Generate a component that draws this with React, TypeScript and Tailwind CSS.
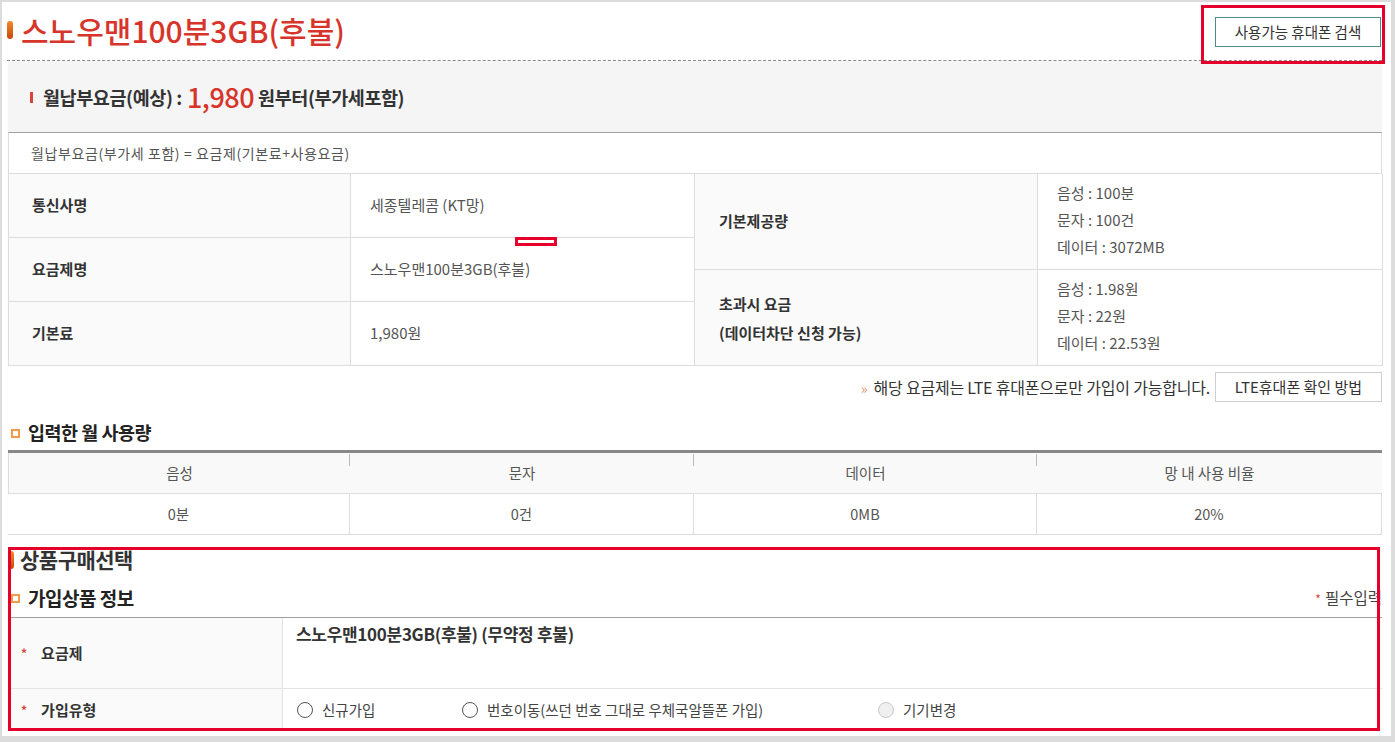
import React from 'react'

const FONT = "font-['Noto_Sans_CJK_KR','Noto_Sans',sans-serif]"

function Bar() {
  return <span className="inline-block h-[18px] w-[6px] rounded-full bg-gradient-to-b from-[#f08a2a] to-[#c9460a]" />
}

function Square() {
  return <span className="inline-block h-[9px] w-[9px] border-2 border-[#f09a4a] bg-white" />
}

function Radio({ label, disabled }: { label: string; disabled?: boolean }) {
  return (
    <label className="flex items-center gap-[9px]">
      <span
        className={`inline-block h-[16px] w-[16px] rounded-full border ${
          disabled ? 'border-[#c8c8c8] bg-[#f0f0f0]' : 'border-[#555] bg-white'
        }`}
      />
      <span className="text-[14.5px] text-[#444]">{label}</span>
    </label>
  )
}

const SPEC = [
  { label: '통신사명', value: '세종텔레콤 (KT망)' },
  { label: '요금제명', value: '스노우맨100분3GB(후불)' },
  { label: '기본료', value: '1,980원' }
]

const USAGE = [
  { head: '음성', value: '0분' },
  { head: '문자', value: '0건' },
  { head: '데이터', value: '0MB' },
  { head: '망 내 사용 비율', value: '20%' }
]

export default function App(): JSX.Element {
  return (
    <div className={`h-[742px] w-[1395px] overflow-hidden bg-[#dcdcdc] pl-[2px] pt-[2px] ${FONT}`}>
      <div className="relative h-[734px] w-[1389px] bg-white pl-[6px] text-[#333]">
        {/* title */}
        <div className="-ml-[1px] flex h-[59px] w-[1375px] items-center justify-between border-b border-dashed border-[#8a8a8a] pr-[1px]">
          <div className="flex items-center gap-[8px] pb-[2px]">
            <Bar />
            <h1 className="text-[30px] font-medium leading-none text-[#d7352b]">스노우맨100분3GB(후불)</h1>
          </div>
          <button className="mt-[1px] h-[30px] w-[166px] border border-[#4f8b8b] text-[14.5px] text-[#333]">
            사용가능 휴대폰 검색
          </button>
        </div>

        <div className="w-[1374px]">
          {/* monthly fee */}
          <div className="flex h-[71px] items-center bg-[#f5f5f5] pl-[22px] pt-[2px]">
            <span className="mr-[10px] inline-block h-[11px] w-[3px] bg-[#d9453b]" />
            <span className="text-[18.5px] font-bold tracking-[-0.4px] text-[#333]">월납부요금(예상) :</span>
            <span className="ml-[5px] text-[27px] font-medium tracking-[-0.5px] text-[#d7352b]">1,980</span>
            <span className="ml-[4px] text-[18.5px] font-bold tracking-[-0.4px] text-[#333]">원부터(부가세포함)</span>
          </div>

          {/* formula */}
          <div className="flex h-[42px] items-center border-x border-b border-t border-x-[#ddd] border-b-[#ddd] border-t-[#a0a0a0] pl-[22px] text-[14px] tracking-[0.6px] text-[#555]">
            월납부요금(부가세 포함) = 요금제(기본료+사용요금)
          </div>

          {/* spec table */}
          <div className="grid grid-cols-[342px_344px_343px_345px] grid-rows-[repeat(6,32px)] border-l border-[#ddd]">
            {SPEC.map((s, i) => (
              <React.Fragment key={s.label}>
                <div
                  className="col-start-1 row-span-2 flex items-center border-b border-r border-[#ddd] bg-[#fafafa] pl-[23px] text-[15px] font-bold text-[#333]"
                  style={{ gridRowStart: i * 2 + 1 }}
                >
                  {s.label}
                </div>
                <div
                  className="col-start-2 row-span-2 flex items-center border-b border-r border-[#ddd] pl-[19px] text-[15px] text-[#555]"
                  style={{ gridRowStart: i * 2 + 1 }}
                >
                  {s.value}
                </div>
              </React.Fragment>
            ))}
            <div className="col-start-3 row-span-3 row-start-1 flex items-center border-b border-r border-[#ddd] bg-[#fafafa] pl-[24px] text-[15px] font-bold text-[#333]">
              기본제공량
            </div>
            <div className="col-start-4 row-span-3 row-start-1 flex flex-col justify-center border-b border-r border-[#ddd] pb-[4px] pl-[19px] text-[15px] leading-[27px] text-[#555]">
              <span>음성 : 100분</span>
              <span>문자 : 100건</span>
              <span>데이터 : 3072MB</span>
            </div>
            <div className="col-start-3 row-span-3 row-start-4 flex flex-col justify-center border-b border-r border-[#ddd] bg-[#fafafa] pl-[24px] text-[15px] font-bold leading-[29px] text-[#333]">
              <span>초과시 요금</span>
              <span>(데이터차단 신청 가능)</span>
            </div>
            <div className="col-start-4 row-span-3 row-start-4 flex flex-col justify-center border-b border-r border-[#ddd] pb-[4px] pl-[19px] text-[15px] leading-[27px] text-[#555]">
              <span>음성 : 1.98원</span>
              <span>문자 : 22원</span>
              <span>데이터 : 22.53원</span>
            </div>
          </div>

          {/* LTE note */}
          <div className="flex items-center justify-end gap-[5px] pt-[6px]">
            <span className="text-[16px] tracking-[-0.2px] text-[#333]">
              <span className="mr-[6px] text-[14px] text-[#e8906a]">»</span>
              해당 요금제는 LTE 휴대폰으로만 가입이 가능합니다.
            </span>
            <button className="h-[30px] w-[167px] border border-[#cfcfcf] text-[15px] text-[#333]">LTE휴대폰 확인 방법</button>
          </div>

          {/* usage */}
          <div className="mt-[18px] flex h-[26px] items-center gap-[8px] pl-[3px]">
            <Square />
            <h2 className="text-[18.5px] font-bold tracking-[-0.5px] text-[#222]">입력한 월 사용량</h2>
          </div>
          <div className="mt-[4px] grid grid-cols-[342px_344px_343px_345px] border-t-[3px] border-[#888]">
            {USAGE.map((u, i) => (
              <div
                key={u.head}
                className="relative flex h-[41px] items-center justify-center border-b border-[#ddd] bg-[#f9f9f9] text-[14.5px] text-[#555] first:border-l last:border-r"
              >
                {i > 0 && <span className="absolute left-[-1px] top-[1px] h-[12px] w-px bg-[#bbb]" />}
                {u.head}
              </div>
            ))}
            {USAGE.map((u) => (
              <div
                key={u.value}
                className="flex h-[41px] items-center justify-center border-b border-r border-[#ddd] text-[14.5px] text-[#555] first:border-l"
              >
                {u.value}
              </div>
            ))}
          </div>

          {/* purchase */}
          <div className="mt-[11px] flex h-[28px] items-center gap-[6px]">
            <Bar />
            <h2 className="text-[21px] font-bold tracking-[-0.5px] text-[#333]">상품구매선택</h2>
          </div>
          <div className="mb-[4px] mt-[9px] flex h-[30px] items-center justify-between pl-[3px]">
            <div className="flex items-center gap-[8px]">
              <Square />
              <h3 className="text-[19px] font-bold tracking-[-0.5px] text-[#222]">가입상품 정보</h3>
            </div>
            <span className="text-[15.5px] text-[#444]">
              <span className="mr-[4px] text-[12px] text-[#d9453b]">*</span>필수입력
            </span>
          </div>
          <div className="grid grid-cols-[274px_1100px] border-t border-[#a0a0a0]">
            <div className="flex h-[71px] items-center border-b border-[#e3e3e3] bg-[#fafafa] pl-[13px] text-[15px] font-bold text-[#333]">
              <span className="mr-[14px] text-[12px] text-[#d9453b]">*</span>요금제
            </div>
            <div className="h-[71px] border-b border-l border-[#e3e3e3] pl-[13px] pt-[3px] text-[17px] font-bold tracking-[-0.3px] text-[#333]">
              스노우맨100분3GB(후불) (무약정 후불)
            </div>
            <div className="flex h-[42px] items-center bg-[#fafafa] pl-[13px] text-[15px] font-bold text-[#333]">
              <span className="mr-[14px] text-[12px] text-[#d9453b]">*</span>가입유형
            </div>
            <div className="flex h-[42px] items-center border-l border-[#e3e3e3] pl-[14px]">
              <div className="w-[165px]">
                <Radio label="신규가입" />
              </div>
              <div className="w-[416px]">
                <Radio label="번호이동(쓰던 번호 그대로 우체국알뜰폰 가입)" />
              </div>
              <Radio label="기기변경" disabled />
            </div>
          </div>
        </div>

        {/* annotation boxes */}
        <div className="absolute left-[1199px] top-[3px] h-[59px] w-[184px] border-[3px] border-[#e4002b]" />
        <div className="absolute left-[513px] top-[235px] h-[9px] w-[42px] border-[3px] border-[#e4002b] bg-white" />
        <div className="absolute left-[6px] top-[545px] h-[184px] w-[1372px] border-[3px] border-[#e4002b]" />
      </div>
    </div>
  )
}
